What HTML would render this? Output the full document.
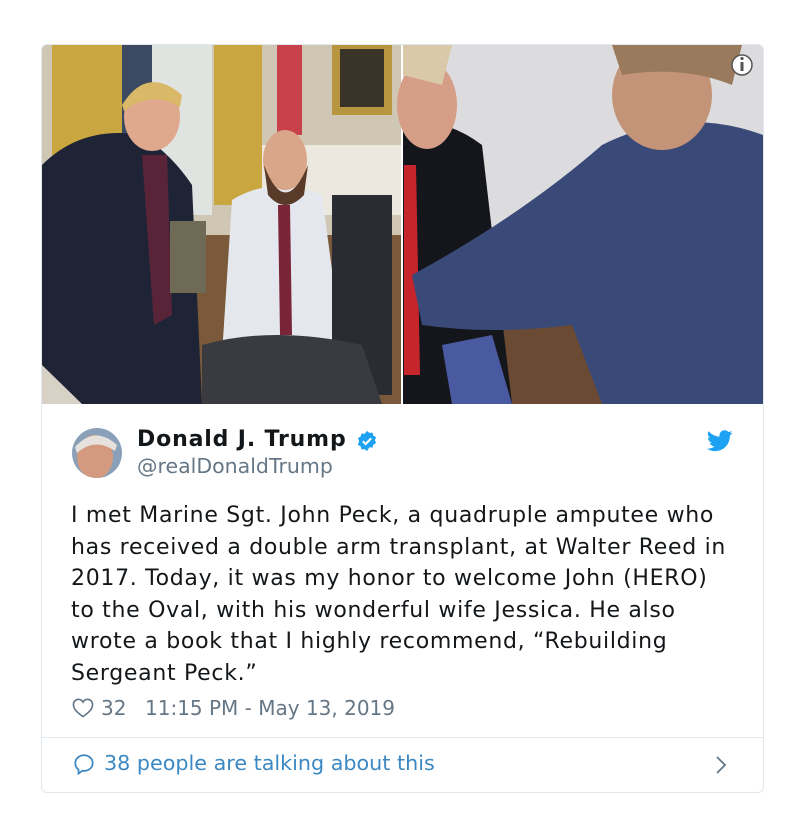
<!DOCTYPE html>
<html><head><meta charset="utf-8"><style>
body{margin:0;background:#fff;width:800px;height:823px;position:relative;font-family:"DejaVu Sans","Liberation Sans",sans-serif;overflow:hidden}
.card{position:absolute;left:41px;top:44px;width:721px;height:747px;border:1px solid #e1e8ed;border-radius:6px;overflow:hidden;background:#fff}
.abs{position:absolute;white-space:nowrap}
</style></head><body>
<div class="card">
<svg class="abs" style="left:0;top:0" width="721" height="359" viewBox="0 0 721 359">
<rect x="0" y="0" width="359" height="359" fill="#cfc7b4"/>
<rect x="10" y="0" width="70" height="180" fill="#c9a640"/>
<rect x="80" y="0" width="55" height="100" fill="#3b4a60"/>
<rect x="110" y="0" width="60" height="170" fill="#dfe4e0"/>
<rect x="172" y="0" width="48" height="160" fill="#c9a640"/>
<rect x="235" y="0" width="25" height="90" fill="#c9414a"/>
<rect x="290" y="0" width="60" height="70" fill="#b8953f"/>
<rect x="298" y="4" width="44" height="58" fill="#3a3428"/>
<rect x="220" y="100" width="139" height="70" fill="#ece8e0"/>
<rect x="0" y="190" width="359" height="169" fill="#7a5a3a"/>
<rect x="0" y="300" width="110" height="59" fill="#d8d2c6"/>
<path d="M0 120 Q40 80 100 90 Q130 110 150 140 L160 359 L40 359 L0 320Z" fill="#1e2436"/>
<path d="M100 110 L125 110 L130 270 L112 280 Z" fill="#5a2438"/>
<ellipse cx="110" cy="72" rx="28" ry="34" fill="#e0a88c"/>
<path d="M80 60 Q105 20 140 50 L138 62 Q110 45 82 66Z" fill="#d9b868"/>
<rect x="128" y="176" width="36" height="72" fill="#6f6a55"/>
<path d="M190 155 Q230 130 280 150 L300 300 L180 310Z" fill="#e4e8ee"/>
<path d="M236 160 L248 160 L250 290 L238 290Z" fill="#7a2438"/>
<rect x="290" y="150" width="60" height="200" fill="#2a2c34"/>
<path d="M160 300 Q230 280 320 300 L340 359 L160 359Z" fill="#3a3b40"/>
<ellipse cx="243" cy="115" rx="22" ry="30" fill="#d9a68a"/>
<path d="M222 120 Q243 175 266 120 L262 150 Q243 170 226 150Z" fill="#5a3a28"/>
<rect x="359" y="0" width="2" height="359" fill="#fff"/>
<rect x="361" y="0" width="360" height="359" fill="#dcdcde"/>
<rect x="361" y="200" width="360" height="159" fill="#6b4a33"/>
<path d="M361 80 Q400 70 440 100 L470 359 L361 359Z" fill="#15161c"/>
<path d="M362 120 L374 120 L378 330 L362 330Z" fill="#c5252b"/>
<ellipse cx="385" cy="60" rx="30" ry="44" fill="#d69e86"/>
<path d="M361 0 L410 0 L400 40 L361 30Z" fill="#d9c9a8"/>
<path d="M370 230 Q480 170 560 100 Q640 60 721 90 L721 359 L560 359 L530 280 Q450 290 380 280Z" fill="#3a4a78"/>
<ellipse cx="620" cy="50" rx="50" ry="55" fill="#c49478"/>
<path d="M570 0 L700 0 L690 40 Q640 20 580 30Z" fill="#9a7a5c"/>
<path d="M400 300 L450 290 L470 359 L410 359Z" fill="#4a5aa0"/>
<circle cx="700" cy="20" r="10" fill="#fff" stroke="#555" stroke-width="1.5"/>
<rect x="698.5" y="17" width="3" height="9" fill="#555"/><circle cx="700" cy="13.5" r="1.6" fill="#555"/>
</svg>
<svg class="abs" style="left:29px;top:382px" width="52" height="52"><defs><clipPath id="c"><circle cx="26" cy="26" r="25"/></clipPath></defs><g clip-path="url(#c)"><rect width="52" height="52" fill="#8aa0b8"/><ellipse cx="24" cy="30" rx="18" ry="22" fill="#d49a80"/><path d="M4 20 Q24 -2 46 18 L44 24 Q24 10 6 26Z" fill="#e6e1dc"/></g></svg>
<div class="abs" style="left:95px;top:382px;font-size:22px;letter-spacing:0.85px;font-weight:bold;color:#14171a">Donald J. Trump</div>
<svg class="abs" style="left:314px;top:385px" width="22" height="22" viewBox="0 0 24 24"><path d="M12 1l2.6 2.2 3.4-.4.9 3.3 3 1.7-1.3 3.2 1.3 3.2-3 1.7-.9 3.3-3.4-.4L12 23l-2.6-2.2-3.4.4-.9-3.3-3-1.7L3.4 12 2.1 8.8l3-1.7.9-3.3 3.4.4z" fill="#1da1f2"/><path d="M7.5 12.3l3 3 6-6.2" stroke="#fff" stroke-width="2.3" fill="none"/></svg>
<div class="abs" style="left:95px;top:409px;font-size:20.5px;color:#657786">@realDonaldTrump</div>
<svg class="abs" style="left:665px;top:385px" width="26" height="22" viewBox="0 0 24 20"><path d="M23.6 2.4c-.9.4-1.8.6-2.8.8 1-.6 1.8-1.5 2.1-2.7-.9.6-2 1-3.1 1.2C18.9.7 17.6.1 16.3.1c-2.7 0-4.8 2.2-4.8 4.8 0 .4 0 .8.1 1.1C7.5 5.8 3.9 3.9 1.5.9c-.4.7-.7 1.6-.7 2.4 0 1.7.9 3.2 2.2 4-.8 0-1.5-.2-2.2-.6v.1c0 2.3 1.7 4.3 3.9 4.7-.4.1-.8.2-1.3.2-.3 0-.6 0-.9-.1.6 1.9 2.4 3.3 4.5 3.4-1.7 1.3-3.7 2.1-6 2.1H0c2.1 1.4 4.7 2.2 7.4 2.2 8.9 0 13.7-7.4 13.7-13.7v-.6c.9-.7 1.8-1.6 2.5-2.6z" fill="#1da1f2"/></svg>
<div class="abs" style="left:29px;top:455px;font-size:22px;letter-spacing:0.7px;line-height:31.6px;color:#14171a;white-space:nowrap">I met Marine Sgt. John Peck, a quadruple amputee who<br>has received a double arm transplant, at Walter Reed in<br>2017. Today, it was my honor to welcome John (HERO)<br>to the Oval, with his wonderful wife Jessica. He also<br>wrote a book that I highly recommend, “Rebuilding<br>Sergeant Peck.”</div>
<svg class="abs" style="left:30px;top:653px" width="22" height="20" viewBox="0 0 24 22"><path d="M12 20.5C5 15.5 1.5 12 1.5 7.2 1.5 4 4 1.5 7 1.5c2.2 0 3.9 1.2 5 3 1.1-1.8 2.8-3 5-3 3 0 5.5 2.5 5.5 5.7 0 4.8-3.5 8.3-10.5 13.3z" fill="none" stroke="#657786" stroke-width="1.8"/></svg>
<div class="abs" style="left:59px;top:651px;font-size:20px;color:#657786">32</div>
<div class="abs" style="left:103px;top:651px;font-size:20px;color:#657786">11:15 PM - May 13, 2019</div>
<div class="abs" style="left:0;top:692px;width:721px;height:1px;background:#e1e8ed"></div>
<svg class="abs" style="left:31px;top:708px" width="22" height="22" viewBox="0 0 24 24"><path d="M12 2.5c5.3 0 9.5 3.8 9.5 8.5s-4.2 8.5-9.5 8.5c-.6 0-1.2 0-1.8-.1L6 22.5v-4.4C3.9 16.5 2.5 14 2.5 11 2.5 6.3 6.7 2.5 12 2.5z" fill="none" stroke="#3b88c3" stroke-width="1.9"/></svg>
<div class="abs" style="left:62px;top:706px;font-size:20.7px;color:#3b88c3">38 people are talking about this</div>
<svg class="abs" style="left:673px;top:710px" width="12" height="20" viewBox="0 0 12 20"><path d="M2 2l8 8-8 8" fill="none" stroke="#657786" stroke-width="1.8"/></svg>
</div>
</body></html>
